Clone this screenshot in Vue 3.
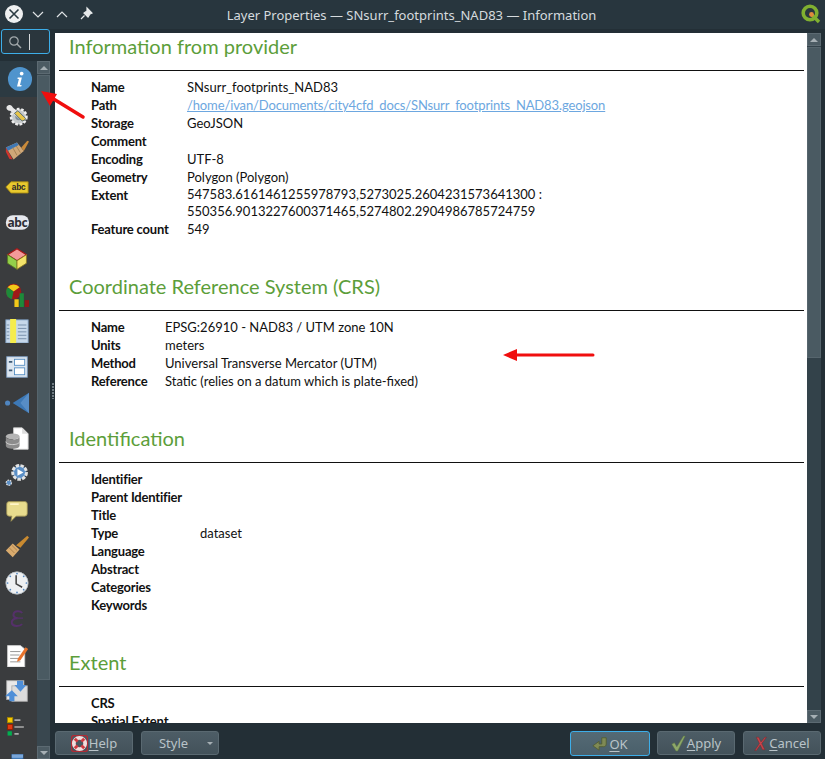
<script setup>
const provider = [
  ['Name', 'SNsurr_footprints_NAD83'],
  ['Path', '/home/ivan/Documents/city4cfd_docs/SNsurr_footprints_NAD83.geojson', true],
  ['Storage', 'GeoJSON'],
  ['Comment', ''],
  ['Encoding', 'UTF-8'],
  ['Geometry', 'Polygon (Polygon)'],
  ['Extent', '547583.6161461255978793,5273025.2604231573641300 : 550356.9013227600371465,5274802.2904986785724759'],
  ['Feature count', '549'],
]
const crs = [
  ['Name', 'EPSG:26910 - NAD83 / UTM zone 10N'],
  ['Units', 'meters'],
  ['Method', 'Universal Transverse Mercator (UTM)'],
  ['Reference', 'Static (relies on a datum which is plate-fixed)'],
]
const ident = [
  ['Identifier', ''],
  ['Parent Identifier', ''],
  ['Title', ''],
  ['Type', 'dataset'],
  ['Language', ''],
  ['Abstract', ''],
  ['Categories', ''],
  ['Keywords', ''],
]
const extent = [
  ['CRS', ''],
  ['Spatial Extent', ''],
]
const sections = [
  { title: 'Information from provider', rows: provider, cls: 'sec-provider' },
  { title: 'Coordinate Reference System (CRS)', rows: crs, cls: 'sec-crs' },
  { title: 'Identification', rows: ident, cls: 'sec-ident' },
  { title: 'Extent', rows: extent, cls: 'sec-extent' },
]
</script>

<template>
  <div class="window">
    <header class="titlebar">
      <div class="win-btns">
        <svg width="26" height="26" viewBox="0 0 26 26"><circle cx="13" cy="13" r="9" fill="#eef0f1"/><path d="M8.500 8.500l9 9M17.500 8.500l-9 9" stroke="#2a3a42" stroke-width="1.600"/></svg>
        <svg class="chev" width="24" height="26" viewBox="0 0 24 26"><path d="M7 11l5 5 5-5" fill="none" stroke="#dfe3e5" stroke-width="1.200"/></svg>
        <svg width="24" height="26" viewBox="0 0 24 26"><path d="M7 16l5-5 5 5" fill="none" stroke="#dfe3e5" stroke-width="1.200"/></svg>
        <svg width="24" height="26" viewBox="0 0 24 26"><path d="M13 7l5 5-2 1-2 3-4-4 3-2zM10.500 14.500l-3.500 3.500" fill="#e6e9ea" stroke="#e6e9ea" stroke-width="1.200"/></svg>
      </div>
      <div class="win-title">Layer Properties — SNsurr_footprints_NAD83 — Information</div>
      <svg class="qgis" width="22" height="22" viewBox="0 0 22 22">
        <circle cx="10" cy="10" r="6.800" fill="none" stroke="#80b030" stroke-width="3.600"/>
        <path d="M12 12l7 7" stroke="#80b030" stroke-width="3.400"/>
        <circle cx="11.500" cy="11.500" r="2.400" fill="#e08a3c"/>
      </svg>
    </header>

    <div class="body">
      <aside class="sidebar">
        <div class="search">
          <svg width="14" height="14" viewBox="0 0 14 14"><circle cx="6" cy="6" r="4.200" fill="none" stroke="#a3a9ac" stroke-width="1.200"/><path d="M9 9l4 4" stroke="#a3a9ac" stroke-width="1.400"/></svg>
          <span class="caret"></span>
        </div>
        <div class="list-wrap">
          <div class="list">
            <div class="item active">
              <svg width="26" height="26" viewBox="0 0 28 28"><circle cx="14" cy="14" r="13" fill="#4f94cd"/><circle cx="15.800" cy="8.200" r="2" fill="#fff"/><path d="M11.500 12.500h4.500l-2 8h1.800l-.5 1.500h-4.500l2-8h-1.500z" fill="#fff"/></svg>
            </div>
            <div class="item">
              <svg viewBox="0 0 28 28"><circle cx="16" cy="16" r="9" fill="#c4c8ca" stroke="#eee" stroke-width="3" stroke-dasharray="3 2"/><circle cx="16" cy="16" r="4" fill="#7f8f9a"/><path d="M2 4c3-3 6-2 7 1l11 11-3 3L6 9C3 9 1 7 2 4z" fill="#e7e7e7"/><path d="M11 12l9 9 3-1 1-2-9-9z" fill="#e7c54a" stroke="#48616f"/></svg>
            </div>
            <div class="item">
              <svg viewBox="0 0 28 28"><path d="M1 10l13-6 8 10-12 10z" fill="#d0a878"/><path d="M1 10l13-6 2 3-13 7z" fill="#3f78b5"/><path d="M1 10l8 14-4-1-4-8z" fill="#d1352c"/><path d="M19 10l7-8 2 1-6 11z" fill="#c98a3a"/><path d="M9 10l5 9M13 8l5 8" stroke="#a08050"/></svg>
            </div>
            <div class="item">
              <svg viewBox="0 0 28 28"><path d="M1 14l6-6h20v13H7z" fill="#e8c92e" stroke="#a88b12"/><text x="7.500" y="18" class="abc-t" fill="#2a2a2a">abc</text></svg>
            </div>
            <div class="item">
              <svg viewBox="0 0 28 28"><rect x="1" y="5" width="27" height="17" rx="8" fill="#e6e8ee"/><text x="3" y="19" class="abc-b" fill="#2e2e36">abc</text></svg>
            </div>
            <div class="item">
              <svg viewBox="0 0 28 28"><path d="M14 2l11 7-11 7L3 9z" fill="#f39a9a" stroke="#a81818" stroke-width="1.400"/><path d="M3 9l11 7v10L3 19z" fill="#93d04a" stroke="#5b7a22"/><path d="M25 9l-11 7v10l11-7z" fill="#f3e36a" stroke="#8a7a22"/></svg>
            </div>
            <div class="item">
              <svg viewBox="0 0 28 28"><circle cx="10" cy="10" r="9" fill="#a01818"/><path d="M3 5a9 9 0 0 1 14 0l-7 5z" fill="#f3c919"/><path d="M10 10L3 5a9 9 0 0 0 5 14z" fill="#1d8a3a"/><rect x="11" y="19" width="5" height="9" fill="#f3c919"/><rect x="17" y="12" width="5" height="16" fill="#1d8a3a"/><rect x="23" y="20" width="5" height="8" fill="#8f1818"/></svg>
            </div>
            <div class="item">
              <svg viewBox="0 0 28 28"><rect x="1" y="1" width="26" height="27" fill="#c7d8ea" stroke="#7c9cc0"/><rect x="6" y="0" width="7" height="28" fill="#f5ec4d"/><path d="M2 7h3M2 11h3M2 15h3M2 19h3M2 23h3M15 7h10M15 11h10M15 15h10M15 19h10M15 23h10" stroke="#6d87a3"/></svg>
            </div>
            <div class="item">
              <svg viewBox="0 0 28 28"><rect x="2" y="2" width="24" height="24" fill="#dce6f0" stroke="#7c9cc0"/><rect x="11" y="5" width="12" height="7" fill="#fff" stroke="#4f8ac0"/><rect x="11" y="15" width="12" height="8" fill="#fff" stroke="#4f8ac0"/><path d="M4.500 8h4M4.500 18h4" stroke="#3d5a75" stroke-width="2"/></svg>
            </div>
            <div class="item">
              <svg viewBox="0 0 28 28"><circle cx="3" cy="14" r="3" fill="#4f85c0"/><path d="M28 2v24L9 14z" fill="#3d78b5"/><path d="M28 2v24L18 14z" fill="#6b9bd0" opacity=".6"/></svg>
            </div>
            <div class="item">
              <svg viewBox="0 0 28 28"><path d="M10 1h10l7 7v18H10z" fill="#fff" stroke="#ccc"/><path d="M20 1v7h7z" fill="#ddd"/><ellipse cx="9" cy="11" rx="8" ry="3.500" fill="#b4b4b4"/><path d="M1 11v11c0 2 3.500 3.500 8 3.500s8-1.500 8-3.500V11c0 2-3.500 3.500-8 3.500S1 13 1 11z" fill="#8c8c8c"/><path d="M1 17c0 2 3.500 3.500 8 3.500s8-1.500 8-3.500" fill="none" stroke="#ddd"/></svg>
            </div>
            <div class="item">
              <svg viewBox="0 0 28 28"><circle cx="17" cy="11" r="8" fill="#5b8fc6" stroke="#e3e3e3" stroke-width="3.500" stroke-dasharray="4 1.500"/><path d="M14.500 7l7 4-7 4z" fill="#fff"/><circle cx="4.500" cy="23" r="3" fill="#5b8fc6" stroke="#ddd" stroke-width="1.500" stroke-dasharray="2 1"/></svg>
            </div>
            <div class="item">
              <svg viewBox="0 0 28 28"><path d="M5 3h18a3 3 0 0 1 3 3v11a3 3 0 0 1-3 3H13l-6 6 1-6H5a3 3 0 0 1-3-3V6a3 3 0 0 1 3-3z" fill="#e8dc8e" stroke="#9a8f52"/><path d="M6 6h10" stroke="#fff6c8" stroke-width="2"/></svg>
            </div>
            <div class="item">
              <svg viewBox="0 0 28 28"><path d="M1 18l8-8 8 7-8 9z" fill="#d9ab6e"/><path d="M13 12L26 1l2 2-10 12z" fill="#c98a30"/><path d="M5 15l6 6M8 12l6 6" stroke="#a87e48"/></svg>
            </div>
            <div class="item">
              <svg viewBox="0 0 28 28"><circle cx="14" cy="14" r="13" fill="#eef0f2" stroke="#b4bbc1"/><path d="M13 5v10l7 4" fill="none" stroke="#444" stroke-width="1.800"/><g fill="#4f85c0"><circle cx="14" cy="3" r="1"/><circle cx="14" cy="25" r="1"/><circle cx="3" cy="14" r="1"/><circle cx="25" cy="14" r="1"/><circle cx="6.200" cy="6.200" r="1"/><circle cx="21.800" cy="6.200" r="1"/><circle cx="6.200" cy="21.800" r="1"/><circle cx="21.800" cy="21.800" r="1"/></g></svg>
            </div>
            <div class="item">
              <svg viewBox="0 0 28 28"><path d="M20 7c-2-3-9-3-10 1-1 3 2 5 5 5-5 0-8 3-7 6 1 4 9 4 12 1" fill="none" stroke="#55306a" stroke-width="2.400"/><path d="M15 13h6" stroke="#55306a" stroke-width="1.500"/></svg>
            </div>
            <div class="item">
              <svg viewBox="0 0 28 28"><path d="M3 3h15l5 4v21H3z" fill="#fff" stroke="#ccc"/><path d="M6 10h12M6 14h11M6 18h10M6 22h12" stroke="#888"/><path d="M15 18l9-13 3 2-9 13-4 2z" fill="#e8732c"/></svg>
            </div>
            <div class="item">
              <svg viewBox="0 0 28 28"><rect x="2" y="2" width="20" height="22" fill="#e8e8e8" stroke="#aaa"/><rect x="8" y="8" width="18" height="18" fill="#dcdcdc" stroke="#aaa"/><path d="M14 2h7v5h4l-7 8-7-8h3z" fill="#4f8fd8"/><path d="M8 13l7 7h-4v6H5v-6H0z" fill="#4f8fd8"/></svg>
            </div>
            <div class="item">
              <svg viewBox="0 0 28 28"><rect x="3" y="3" width="6" height="6" fill="#f5c800" stroke="#a58500"/><rect x="3" y="11" width="6" height="6" fill="#e03a10" stroke="#902000"/><rect x="3" y="19" width="5" height="5" fill="#00b050"/><path d="M11 6h7M11 14h11M11 22h5" stroke="#aaa" stroke-width="2"/></svg>
            </div>
            <div class="item">
              <svg viewBox="0 0 28 28"><rect x="8" y="4" width="13" height="22" fill="#3f78b5" stroke="#2f5f96"/><rect x="8" y="4" width="13" height="4" fill="#7aa6d8"/></svg>
            </div>
          </div>
          <div class="scroll side-scroll">
            <div class="sbtn"><span class="tri up"></span></div>
            <div class="thumb"></div>
            <div class="track"></div>
            <div class="sbtn"><span class="tri down"></span></div>
          </div>
        </div>
      </aside>

      <div class="splitter"><span class="grip"></span></div>

      <div class="right">
        <div class="content">
          <main class="page">
            <section v-for="s in sections" :key="s.title" class="section" :class="s.cls">
              <h2>{{ s.title }}</h2>
              <table>
                <tbody>
                  <tr v-for="r in s.rows" :key="r[0]">
                    <th>{{ r[0] }}</th>
                    <td :class="{ wrapped: r[0] === 'Extent' }"><a v-if="r[2]">{{ r[1] }}</a><template v-else>{{ r[1] }}</template></td>
                  </tr>
                </tbody>
              </table>
            </section>
          </main>
          <div class="scroll page-scroll">
            <div class="sbtn"><span class="tri up"></span></div>
            <div class="thumb"></div>
            <div class="track"></div>
            <div class="sbtn"><span class="tri down"></span></div>
          </div>
        </div>

        <footer class="footer">
          <div class="foot-left">
            <button class="btn help">
              <svg width="17" height="17" viewBox="2 2 18 18"><rect x="2.500" y="2.500" width="17" height="17" rx="3" fill="none" stroke="#b02a34" stroke-width="1.400"/><circle cx="11" cy="11" r="6" fill="none" stroke="#f3dcdc" stroke-width="4"/><path d="M6 6l3 3M16 6l-3 3M6 16l3-3M16 16l-3-3" stroke="#cf3a40" stroke-width="3"/></svg>
              <span><u>H</u>elp</span>
            </button>
            <button class="btn style">Style<span class="tri-small"></span></button>
          </div>
          <div class="foot-right">
            <button class="btn ok">
              <svg width="16" height="16" viewBox="0 0 18 18"><path d="M11 2h5v7c0 2-1 3-3 3H8v4L1 11l7-5v3h3z" fill="#7f8a55" stroke="#515c34"/></svg>
              <span><u>O</u>K</span>
            </button>
            <button class="btn apply">
              <svg width="15" height="17" viewBox="0 0 18 20"><path d="M1 11l3-2 3 5L15 1h2L8 19H6z" fill="#8fa86a" stroke="#5f7a42" stroke-width=".6"/></svg>
              <span><u>A</u>pply</span>
            </button>
            <button class="btn cancel">
              <svg width="14" height="17" viewBox="0 0 18 20"><path d="M3 2h3l3 6 5-6h2l-6 8 4 8h-3l-3-6-5 7H1l6-9z" fill="#c8434a" stroke="#7e2428" stroke-width=".6"/></svg>
              <span><u>C</u>ancel</span>
            </button>
          </div>
        </footer>
      </div>
    </div>

    <!-- red annotations drawn over the screenshot -->
    <svg class="annot" width="825" height="759" viewBox="0 0 825 759">
      <path d="M83 117L52 98" stroke="#f00e0e" stroke-width="3.500" stroke-linecap="round"/>
      <path d="M41 91l16 3-7 12z" fill="#f00e0e"/>
      <path d="M593 355H514" stroke="#f00e0e" stroke-width="3" stroke-linecap="round"/>
      <path d="M503 355l14-6v12z" fill="#f00e0e"/>
    </svg>
  </div>
</template>

<style>
html, body {
  margin: 0;
  background: #232f36;
}
</style>

<style scoped>
.window {
  position: relative;
  width: 825px;
  height: 759px;
  overflow: hidden;
  display: flex;
  flex-direction: column;
  background: #232f36;
  font-family: "Noto Sans", sans-serif;
  color: #dfe3e5;
}
.titlebar {
  height: 29px;
  flex: none;
  display: grid;
  grid-template-columns: 1fr auto 1fr;
  align-items: center;
  padding: 0 3px 1px 1px;
  box-sizing: border-box;
  background: #28363e;
}
.win-btns {
  display: flex;
  align-items: center;
}
.win-btns svg {
  display: block;
}
.win-btns .chev {
  margin-left: -1px;
}
.win-title {
  font-size: 13px;
  margin-top: 2px;
  white-space: nowrap;
  color: #d6dbde;
}
.qgis {
  justify-self: end;
}
.body {
  flex: 1;
  min-height: 0;
  display: flex;
}
.sidebar {
  width: 51px;
  flex: none;
  display: flex;
  flex-direction: column;
}
.search {
  margin: 0 1px;
  height: 25px;
  flex: none;
  box-sizing: border-box;
  border: 1px solid #3daee9;
  border-radius: 3px;
  background: #2a363d;
  display: flex;
  align-items: center;
  gap: 7px;
  padding-left: 6px;
}
.caret {
  width: 1px;
  height: 16px;
  background: #d6dadc;
}
.list-wrap {
  flex: 1;
  min-height: 0;
  display: flex;
  margin-top: 7px;
  overflow: hidden;
}
.list {
  width: 37px;
  flex: none;
  background: #3a3c3e;
}
.item {
  height: 36px;
  display: flex;
  align-items: center;
  padding-left: 5px;
  box-sizing: border-box;
}
.item svg {
  width: 24px;
  height: 24px;
}
.item.active {
  background: #2c3a42;
  padding-left: 7px;
}
.item.active svg {
  width: 26px;
  height: 26px;
}
.abc-t {
  font: bold 10px "Liberation Mono", monospace;
  letter-spacing: -0.5px;
}
.abc-b {
  font: bold 14px "Noto Sans", sans-serif;
  letter-spacing: -0.5px;
}
.scroll {
  flex: none;
  display: flex;
  flex-direction: column;
  background: #39474f;
}
.side-scroll {
  width: 13px;
  height: 698px;
}
.page-scroll {
  width: 14px;
  height: 690px;
  background: #33424a;
}
.sbtn {
  height: 13px;
  flex: none;
  background: #4c5b63;
  border: 1px solid #5c6a72;
  box-sizing: border-box;
  display: flex;
  align-items: center;
  justify-content: center;
}
.tri {
  width: 0;
  height: 0;
  border-left: 4px solid transparent;
  border-right: 4px solid transparent;
}
.tri.up {
  border-bottom: 4px solid #a6afb4;
}
.tri.down {
  border-top: 4px solid #a6afb4;
}
.thumb {
  margin-top: 1px;
  background: #4a5a62;
  border: 1px solid #56656d;
  box-sizing: border-box;
}
.side-scroll .thumb {
  height: 605px;
}
.page-scroll .thumb {
  height: 311px;
}
.track {
  flex: 1;
}
.splitter {
  width: 4px;
  flex: none;
  display: flex;
  align-items: center;
  justify-content: center;
}
.grip {
  width: 2px;
  height: 16px;
  margin-top: -6px;
  background: repeating-linear-gradient(#6f7b82 0 2px, transparent 2px 3px);
}
.right {
  flex: 1;
  min-width: 0;
  display: flex;
  flex-direction: column;
  padding-top: 4px;
}
.content {
  display: flex;
  flex: none;
}
.page {
  width: 752px;
  height: 690px;
  flex: none;
  box-sizing: border-box;
  background: #fff;
  overflow: hidden;
  padding: 0 3px 0 4px;
  color: #111;
  font-family: Lato, sans-serif;
}
.section h2 {
  margin: 0;
  height: 38px;
  padding-left: 10px;
  box-sizing: border-box;
  border-bottom: 1px solid #111;
  color: #5c9e3a;
  font-size: 20px;
  font-weight: 400;
  line-height: 27px;
}
.sec-crs,
.sec-ident,
.sec-extent {
  margin-top: 35px;
}
.section table {
  margin: 7px 0 0 32px;
  border-collapse: collapse;
}
th, td {
  padding: 0;
  vertical-align: top;
  line-height: 18px;
  text-align: left;
  font-size: 13px;
}
td.wrapped {
  line-height: 17px;
}
th {
  font-weight: 700;
  white-space: nowrap;
  letter-spacing: -0.2px;
}
.sec-provider th {
  width: 96px;
}
.sec-crs th {
  width: 74px;
}
.sec-ident th {
  width: 109px;
}
.sec-provider td {
  width: 370px;
}
a {
  color: #6da7e0;
  text-decoration: underline;
  letter-spacing: -0.13px;
}
.footer {
  flex: 1;
  display: flex;
  justify-content: space-between;
  padding: 8px 4px 0 0;
  box-sizing: border-box;
}
.foot-left, .foot-right {
  display: flex;
  gap: 8px;
}
.btn {
  height: 24px;
  box-sizing: border-box;
  border: 1px solid #5a6971;
  border-radius: 3px;
  background: linear-gradient(#4d5d66, #43525a);
  color: #b9c3c8;
  font-family: "Noto Sans", sans-serif;
  font-size: 13px;
  display: flex;
  align-items: center;
  justify-content: center;
  gap: 1px;
  padding: 0;
}
.btn u {
  text-underline-offset: 2px;
}
.help {
  width: 78px;
}
.style {
  width: 78px;
  position: relative;
  padding-right: 13px;
}
.tri-small {
  position: absolute;
  right: 5px;
  top: 10px;
  border-left: 3px solid transparent;
  border-right: 3px solid transparent;
  border-top: 3px solid #a6afb4;
}
.ok {
  width: 80px;
  height: 25px;
  margin: 0 -1px 0 0;
  border-color: #3daee9;
  background: linear-gradient(#546a75, #4a5f6a);
}
.apply {
  width: 78px;
}
.cancel {
  width: 78px;
}
.annot {
  position: absolute;
  left: 0;
  top: 0;
  pointer-events: none;
}
</style>
